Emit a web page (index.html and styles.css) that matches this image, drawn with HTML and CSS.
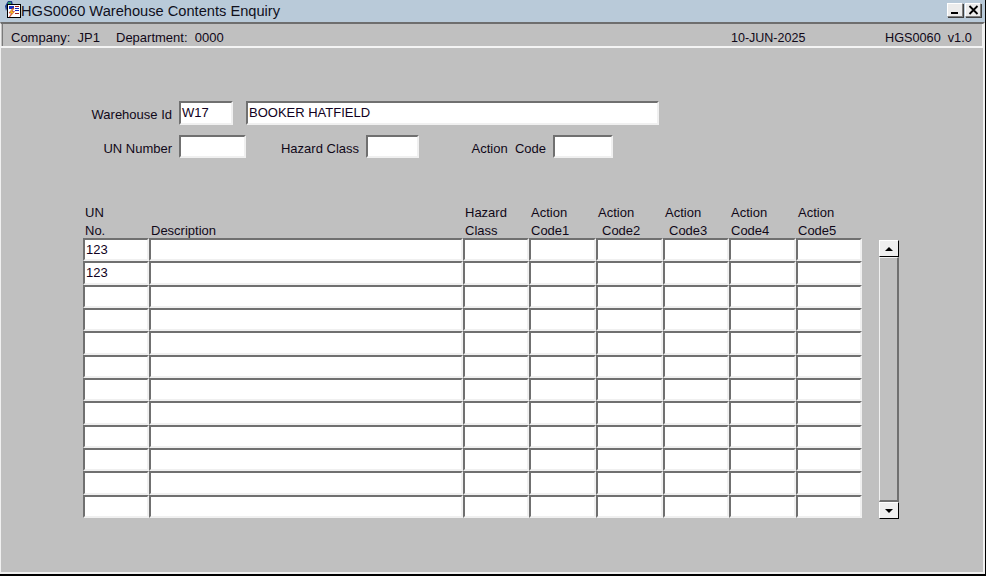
FILE: index.html
```html
<!DOCTYPE html>
<html lang="en">
<head>
<meta charset="utf-8">
<title>HGS0060 Warehouse Contents Enquiry</title>
<link rel="stylesheet" href="styles.css">
</head>
<body>
<div class="window">
  <header class="titlebar">
    <svg class="appicon" width="18" height="18" viewBox="0 0 18 18">
      <path d="M2 5 L5 0 L9 0 L10 4 L5 5 L3 10Z" fill="#1d3f8f"/>
      <path d="M5 1 L8 1 L8 3 L5 3Z" fill="#2f9a6a"/>
      <rect x="4.5" y="3.5" width="13" height="13" fill="#fff" stroke="#000"/>
      <rect x="6" y="5" width="5" height="3" fill="#1a2fc0"/>
      <rect x="12" y="5" width="4" height="1" fill="#a02020"/>
      <rect x="12" y="7" width="4" height="1" fill="#1a2fc0"/>
      <rect x="12" y="9" width="4" height="1" fill="#1a2fc0"/>
      <rect x="12" y="12" width="4" height="1" fill="#a02020"/>
      <path d="M10 7 L6 12 L8.5 12 L6.5 16 L11.5 10.5 L9 10.5 L11 7Z" fill="#f5d020" stroke="#c02020" stroke-width=".6"/>
    </svg>
    <span class="title">HGS0060 Warehouse Contents Enquiry</span>
    <div class="winbtns">
      <button class="winbtn"><svg width="10" height="10" viewBox="0 0 10 10"><rect x="1" y="7" width="7" height="2" fill="#000"/></svg></button>
      <button class="winbtn"><svg width="11" height="10" viewBox="0 0 11 10"><path d="M1.5 1 L9.5 9 M9.5 1 L1.5 9" stroke="#000" stroke-width="1.8" fill="none"/></svg></button>
    </div>
  </header>
  <div class="content">
    <div class="statusbar">
      <div class="statusinner">
        <span class="st-company">Company:&nbsp; JP1</span>
        <span class="st-dept">Department:&nbsp; 0000</span>
        <span class="st-date">10-JUN-2025</span>
        <span class="st-ver">HGS0060&nbsp; v1.0</span>
      </div>
    </div>
    <div class="form">
      <div class="line line-a">
        <label class="lbl lbl-wh">Warehouse Id</label>
        <div class="fld f-wh">W17</div>
        <div class="fld f-name">BOOKER HATFIELD</div>
      </div>
      <div class="line line-b">
        <label class="lbl lbl-un">UN Number</label>
        <div class="fld f-un"></div>
        <label class="lbl lbl-hz">Hazard Class</label>
        <div class="fld f-hz"></div>
        <label class="lbl lbl-ac">Action&nbsp; Code</label>
        <div class="fld f-ac"></div>
      </div>
      <div class="block">
        <div class="tablewrap">
          <div class="heads">
            <div class="h">UN<br>No.</div>
            <div class="h">&nbsp;<br>Description</div>
            <div class="h">Hazard<br>Class</div>
            <div class="h">Action<br>Code1</div>
            <div class="h">Action<br><span class="i1">Code2</span></div>
            <div class="h">Action<br><span class="i1">Code3</span></div>
            <div class="h">Action<br>Code4</div>
            <div class="h">Action<br>Code5</div>
          </div>
          <div class="rows" id="rows"></div>
        </div>
        <div class="scroll">
          <div class="sbtn"><span class="up"></span></div>
          <div class="strack"></div>
          <div class="sbtn"><span class="down"></span></div>
        </div>
      </div>
    </div>
  </div>
</div>
<script src="app.js"></script>
</body>
</html>
```
FILE: app.js
```js
var rows = document.getElementById('rows');
for (var r = 0; r < 12; r++) {
  for (var c = 0; c < 8; c++) {
    var d = document.createElement('div');
    d.className = 'fld cell';
    if (c === 0 && r < 2) d.textContent = '123';
    rows.appendChild(d);
  }
}
```
FILE: styles.css
```css
* { box-sizing: border-box; }
html, body { margin: 0; padding: 0; background: #fff; }
body { width: 986px; height: 577px; overflow: hidden; font-family: "Liberation Sans", Arial, sans-serif; font-size: 13px; color: #100818; }
.window { width: 986px; height: 576px; background: #000; padding: 0 1px 2px 0; display: flex; flex-direction: column; }
.titlebar { height: 22px; background: #b9cad9; display: flex; align-items: center; flex: none; }
.appicon { margin: 0 0 0 3px; flex: none; position: relative; top: -1px; }
.title { font-size: 14.65px; color: #10101c; white-space: nowrap; }
.winbtns { margin-left: auto; margin-right: 4px; padding-bottom: 2px; display: flex; gap: 2px; }
.winbtn { width: 16px; height: 14px; padding: 0; background: #ececec; border: 1px solid; border-color: #fff #808080 #808080 #fff; display: flex; align-items: center; justify-content: center; box-shadow: 1px 1px 0 #404040; }
.winbtn svg { display: block; }
.content { flex: 1; background: #c0c0c0; border-top: 2px solid #6e6e6e; border-left: 1px solid #f0f0f0; border-right: 2px solid #f0f0f0; border-bottom: 2px solid #f0f0f0; display: flex; flex-direction: column; min-height: 0; }
.statusbar { height: 24px; flex: none; border-bottom: 2px solid #f4f4f4; }
.statusinner { height: 22px; margin-left: 1px; border-left: 1px solid #7a7a7a; border-right: 1px solid #f0f0f0; padding: 5px 0 0 8px; display: flex; align-items: center; }
.st-company { width: 105px; }
.st-dept { width: 615px; }
.st-date { width: 154px; font-size: 12.5px; }
.st-ver { font-size: 12.7px; }
.form { flex: 1; padding: 53px 0 0 0; }
.line { display: flex; }
.lbl { text-align: right; line-height: 27px; white-space: nowrap; }
.fld { background: #fff; border: 2px solid; border-color: #707070 #f0f0f0 #f0f0f0 #707070; line-height: 20px; padding-left: 1px; white-space: nowrap; color: #100020; overflow: hidden; }
.line-a { height: 24px; }
.lbl-wh { width: 171px; }
.f-wh { width: 54px; height: 24px; margin-left: 7px; }
.f-name { width: 413px; height: 24px; margin-left: 13px; }
.line-b { height: 23px; margin-top: 10px; }
.lbl-un { width: 171px; }
.f-un { width: 67px; margin-left: 7px; }
.lbl-hz { width: 113px; }
.f-hz { width: 53px; margin-left: 7px; }
.lbl-ac { width: 127px; }
.f-ac { width: 60px; margin-left: 7px; }
.block { display: flex; margin-top: 44px; padding-left: 82px; }
.heads { display: grid; grid-template-columns: 66px 314px 66px 67px 67px 66px 67px 66px; height: 36px; padding-top: 2px; line-height: 18px; }
.h { padding-left: 2px; white-space: nowrap; }
.i1 { margin-left: 4px; }
.rows { display: grid; grid-template-columns: 66px 314px 66px 67px 67px 66px 67px 66px; grid-template-rows: repeat(12, 23.34px); }
.cell { padding-left: 1px; line-height: 19px; }
.scroll { margin: 38px 0 0 17px; width: 20px; height: 279px; display: flex; flex-direction: column; }
.sbtn { height: 17px; flex: none; background: #efefef; border: 1px solid; border-color: #fff #000 #000 #fff; display: flex; align-items: center; justify-content: center; }
.strack { flex: 1; background: #c0c0c0; border-style: solid; border-color: #f0f0f0 #707070 #707070 #f0f0f0; border-width: 1px 2px 2px 1px; }
.up { width: 0; height: 0; border: 4px solid transparent; border-top: 0; border-bottom: 4px solid #000; }
.down { width: 0; height: 0; border: 4px solid transparent; border-bottom: 0; border-top: 4px solid #000; }
```
